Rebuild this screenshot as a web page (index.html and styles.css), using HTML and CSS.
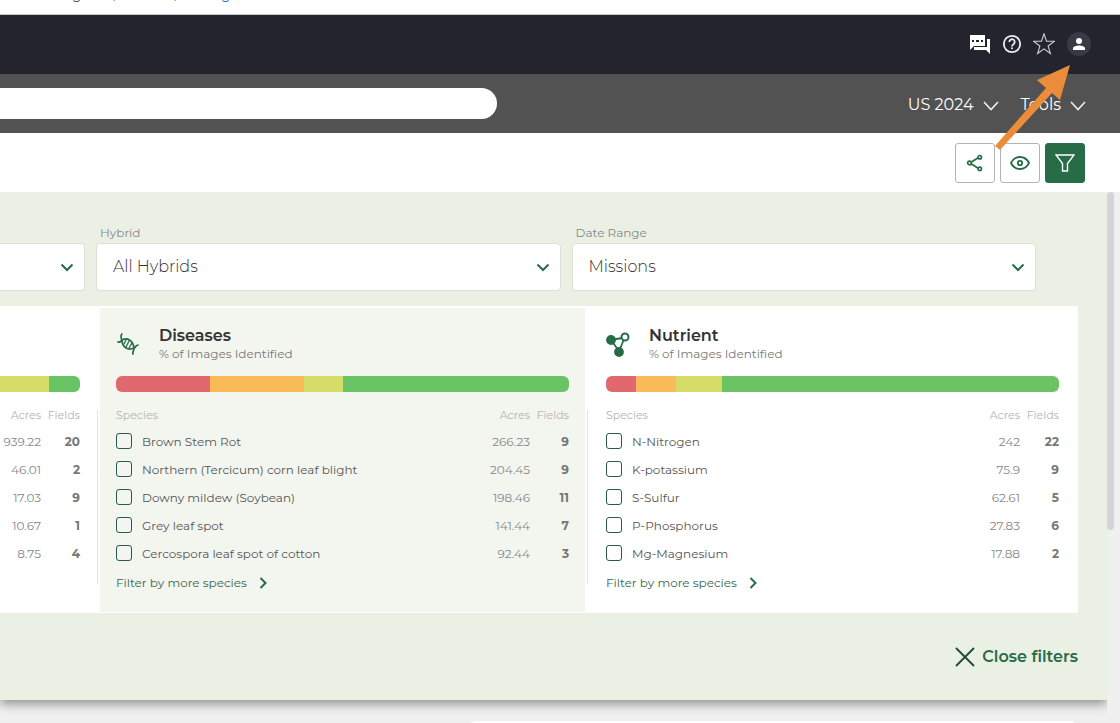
FILE: index.html
```html
<!DOCTYPE html>
<html lang="en">
<head>
    <meta charset="utf-8">
    <title>Field Filters</title>
    <link rel="stylesheet" href="styles.css">
</head>
<body>
    <div class="note">
        <p class="note-text"><span>g</span><span>,</span><span>,</span><a href="#">g</a></p>
    </div>

    <header class="header">
        <nav class="topbar">
            <button type="button" class="icon-button" aria-label="Messages">
                <svg width="22" height="22" viewBox="0 0 22 22">
                    <path d="M1 2h15v11H5l-4 4z" fill="#fff"/>
                    <path d="M18 6h3v15l-4-4H5v-3h13z" fill="#fff"/>
                    <path d="M3 7h2v2H3zM7 7h3v2H7zM12 7h2v2h-2z" fill="#24242e"/>
                </svg>
            </button>
            <button type="button" class="icon-button" aria-label="Help">
                <svg width="22" height="22" viewBox="0 0 22 22" fill="none" stroke="#eee" stroke-width="1.8">
                    <circle cx="11" cy="11" r="8.2"/>
                    <path d="M8.3 9a2.7 2.7 0 1 1 4.2 2.2c-1 .7-1.5 1.1-1.5 2.2"/>
                    <circle cx="11" cy="15.3" r="1" fill="#eee" stroke="none"/>
                </svg>
            </button>
            <button type="button" class="icon-button" aria-label="Favourites">
                <svg width="22" height="22" viewBox="0 0 22 22" fill="none" stroke="#ccc" stroke-width="1.1">
                    <path d="M11 .8l2.5 7.4h8l-6.4 4.8 2.3 7.5-6.4-4.6-6.4 4.6 2.3-7.5L.5 8.2h8z"/>
                </svg>
            </button>
            <button type="button" class="icon-button avatar" aria-label="Account">
                <svg width="14" height="14" viewBox="0 0 14 14" fill="#fff">
                    <circle cx="7" cy="4" r="3"/>
                    <path d="M1 13v-1.500C1 9.500 4 8.500 7 8.500s6 1 6 3V13z"/>
                </svg>
            </button>
        </nav>

        <div class="subbar">
            <input class="search" type="search" aria-label="Search">
            <div class="menus">
                <button type="button" class="menu">US 2024
                    <svg width="16" height="10" viewBox="0 0 16 10" fill="none" stroke="#eee" stroke-width="1.6"><path d="M1 1l7 7.5L15 1"/></svg>
                </button>
                <button type="button" class="menu">Tools
                    <svg width="16" height="10" viewBox="0 0 16 10" fill="none" stroke="#eee" stroke-width="1.6"><path d="M1 1l7 7.5L15 1"/></svg>
                </button>
            </div>
        </div>

        <!-- arrow that points at the account icon -->
        <svg class="pointer" width="78" height="88" viewBox="0 0 78 88" fill="#ea8c3a">
            <path d="M76 1L66 36l-8-7L6 86l-5-4 51-58-9-8z"/>
        </svg>
    </header>

    <div class="toolbar">
        <button type="button" class="tool" aria-label="Share">
            <svg width="18" height="18" viewBox="0 0 18 18" fill="none" stroke="#266c46" stroke-width="1.7">
                <path d="M5 8.2l7.2-4.4M5 9.8l7.2 4.4"/>
                <circle cx="3.5" cy="9" r="1.8"/><circle cx="13.8" cy="3.2" r="1.7"/><circle cx="13.8" cy="14.8" r="1.7"/>
            </svg>
        </button>
        <button type="button" class="tool" aria-label="View">
            <svg width="20" height="16" viewBox="0 0 20 16" fill="none" stroke="#266c46" stroke-width="1.8">
                <path d="M1 8c2-4 5.2-6 9-6s7 2 9 6c-2 4-5.2 6-9 6s-7-2-9-6z"/>
                <circle cx="10" cy="8" r="2.2"/>
            </svg>
        </button>
        <button type="button" class="tool active" aria-label="Filter">
            <svg width="20" height="18" viewBox="0 0 20 18" fill="none" stroke="#fff" stroke-width="1.4">
                <path d="M1 1h18l-6.5 8.5V17h-5V9.5z"/>
            </svg>
        </button>
    </div>

    <main class="main">
        <section class="panel">
            <div class="filters">
                <div class="filter first">
                    <label for="crop">&nbsp;</label>
                    <div class="select-box">
                        <select id="crop" aria-label="Crop"><option></option></select>
                        <svg width="14" height="9" viewBox="0 0 14 9"><path d="M1.5 1.5L7 7l5.5-5.5"/></svg>
                    </div>
                </div>
                <div class="filter">
                    <label for="hybrid">Hybrid</label>
                    <div class="select-box">
                        <select id="hybrid"><option>All Hybrids</option></select>
                        <svg width="14" height="9" viewBox="0 0 14 9"><path d="M1.5 1.5L7 7l5.5-5.5"/></svg>
                    </div>
                </div>
                <div class="filter">
                    <label for="range">Date Range</label>
                    <div class="select-box">
                        <select id="range"><option>Missions</option></select>
                        <svg width="14" height="9" viewBox="0 0 14 9"><path d="M1.5 1.5L7 7l5.5-5.5"/></svg>
                    </div>
                </div>
            </div>

            <div class="cards">
                <section class="card first">
                    <div class="card-head"></div>
                    <div class="bar">
                        <span class="yellow" style="flex-grow: 49"></span>
                        <span class="green" style="flex-grow: 31"></span>
                    </div>
                    <table>
                        <thead><tr><th class="acres">Acres</th><th class="fields">Fields</th></tr></thead>
                        <tbody>
                            <tr><td class="acres">939.22</td><td class="fields">20</td></tr>
                            <tr><td class="acres">46.01</td><td class="fields">2</td></tr>
                            <tr><td class="acres">17.03</td><td class="fields">9</td></tr>
                            <tr><td class="acres">10.67</td><td class="fields">1</td></tr>
                            <tr><td class="acres">8.75</td><td class="fields">4</td></tr>
                        </tbody>
                    </table>
                </section>

                <section class="card shaded">
                    <div class="card-head">
                        <svg width="24" height="24" viewBox="0 0 24 24" fill="none" stroke="#266c46" stroke-linecap="round">
                            <path d="M2 10C4 11 5 9 6 8c6-3 11 1 12 8 0 3-2 4-1 6" stroke-width="1.7"/>
                            <path d="M6 2C4 4 5 6 6 8c0 7 6 11 12 8 2-1 2-3 4-3" stroke-width="1.7"/>
                            <path d="M10 8l-2 4M13 9l-3 6M16 11l-3 5" stroke-width="1.3"/>
                        </svg>
                        <div>
                            <h2>Diseases</h2>
                            <p>% of Images Identified</p>
                        </div>
                    </div>
                    <div class="bar">
                        <span class="red" style="flex-grow: 94"></span>
                        <span class="orange" style="flex-grow: 94"></span>
                        <span class="yellow" style="flex-grow: 39"></span>
                        <span class="green" style="flex-grow: 226"></span>
                    </div>
                    <table>
                        <thead><tr><th>Species</th><th class="acres">Acres</th><th class="fields">Fields</th></tr></thead>
                        <tbody>
                            <tr><td><label><input type="checkbox">Brown Stem Rot</label></td><td class="acres">266.23</td><td class="fields">9</td></tr>
                            <tr><td><label><input type="checkbox">Northern (Tercicum) corn leaf blight</label></td><td class="acres">204.45</td><td class="fields">9</td></tr>
                            <tr><td><label><input type="checkbox">Downy mildew (Soybean)</label></td><td class="acres">198.46</td><td class="fields">11</td></tr>
                            <tr><td><label><input type="checkbox">Grey leaf spot</label></td><td class="acres">141.44</td><td class="fields">7</td></tr>
                            <tr><td><label><input type="checkbox">Cercospora leaf spot of cotton</label></td><td class="acres">92.44</td><td class="fields">3</td></tr>
                        </tbody>
                    </table>
                    <a class="more" href="#">Filter by more species
                        <svg width="8" height="12" viewBox="0 0 8 12"><path d="M1.5 1L6.5 6l-5 5"/></svg>
                    </a>
                </section>

                <section class="card">
                    <div class="card-head">
                        <svg width="24" height="26" viewBox="0 0 24 26" fill="none" stroke="#266c46" stroke-width="1.8">
                            <path d="M5 9l11-2M5 9l8 11M19 6l-6 14"/>
                            <circle cx="5" cy="9" r="4" fill="#266c46"/>
                            <circle cx="13" cy="21" r="4" fill="#266c46"/>
                            <circle cx="19" cy="6" r="3.5" fill="#fff" stroke-width="2"/>
                        </svg>
                        <div>
                            <h2>Nutrient</h2>
                            <p>% of Images Identified</p>
                        </div>
                    </div>
                    <div class="bar">
                        <span class="red" style="flex-grow: 30"></span>
                        <span class="orange" style="flex-grow: 40"></span>
                        <span class="yellow" style="flex-grow: 46"></span>
                        <span class="green" style="flex-grow: 337"></span>
                    </div>
                    <table>
                        <thead><tr><th>Species</th><th class="acres">Acres</th><th class="fields">Fields</th></tr></thead>
                        <tbody>
                            <tr><td><label><input type="checkbox">N-Nitrogen</label></td><td class="acres">242</td><td class="fields">22</td></tr>
                            <tr><td><label><input type="checkbox">K-potassium</label></td><td class="acres">75.9</td><td class="fields">9</td></tr>
                            <tr><td><label><input type="checkbox">S-Sulfur</label></td><td class="acres">62.61</td><td class="fields">5</td></tr>
                            <tr><td><label><input type="checkbox">P-Phosphorus</label></td><td class="acres">27.83</td><td class="fields">6</td></tr>
                            <tr><td><label><input type="checkbox">Mg-Magnesium</label></td><td class="acres">17.88</td><td class="fields">2</td></tr>
                        </tbody>
                    </table>
                    <a class="more" href="#">Filter by more species
                        <svg width="8" height="12" viewBox="0 0 8 12"><path d="M1.5 1L6.5 6l-5 5"/></svg>
                    </a>
                </section>
            </div>

            <button type="button" class="close">
                <svg width="20" height="20" viewBox="0 0 20 20" fill="none" stroke="#1f4a33" stroke-width="1.8"><path d="M1 1l18 18M19 1L1 19"/></svg>
                Close filters
            </button>
        </section>
        <div class="scroll"><div class="thumb"></div></div>
    </main>

    <div class="next-card"></div>
</body>
</html>
```
FILE: styles.css
```css
* {
    box-sizing: border-box;
}

body {
    margin: 0;
    height: 100vh;
    overflow: hidden;
    font-family: Montserrat, Inter, sans-serif;
    font-size: 12px;
    color: #555;
    background: #f0f0f0;
}

h2, p {
    margin: 0;
}

button {
    padding: 0;
    border: none;
    background: none;
    font-family: inherit;
    cursor: pointer;
}

svg {
    display: block;
    flex-shrink: 0;
}

/* end of the text line above the app */
.note {
    height: 15px;
    overflow: hidden;
    background: #fff;
    border-bottom: 1px solid #c4c8c4;
}

.note-text {
    display: grid;
    grid-template-columns: 41px 61px 47px auto;
    margin-top: -16px;
    padding-left: 72px;
    font-size: 14px;
    line-height: 20px;
}

.note-text a {
    color: #2f78b8;
    text-decoration: none;
}

/* header */
.header {
    position: relative;
}

.topbar {
    display: flex;
    justify-content: flex-end;
    align-items: center;
    gap: 10px;
    height: 59px;
    padding: 0 29px 2px 0;
    background: #24242e;
}

.avatar {
    display: flex;
    justify-content: center;
    align-items: center;
    width: 24px;
    height: 24px;
    margin-left: 2px;
    border-radius: 50%;
    background: #3a3a46;
}

.subbar {
    display: flex;
    justify-content: space-between;
    align-items: center;
    height: 59px;
    padding-right: 34px;
    background: #525252;
}

.search {
    width: 497px;
    height: 31px;
    padding: 0 16px;
    border: none;
    border-radius: 0 16px 16px 0;
    background: #fff;
    font-family: inherit;
}

.menus {
    display: flex;
    gap: 22px;
    padding-top: 2px;
}

.menu {
    display: flex;
    align-items: center;
    gap: 9px;
    color: #fff;
    font-size: 16px;
    line-height: 20px;
}

.menu svg {
    margin-top: 2px;
}

.pointer {
    position: absolute;
    top: 49px;
    right: 48px;
    z-index: 1;
    pointer-events: none;
}

/* tool buttons */
.toolbar {
    display: flex;
    justify-content: flex-end;
    align-items: center;
    gap: 5px;
    height: 59px;
    padding: 1px 35px 0 0;
    background: #fff;
}

.tool {
    display: flex;
    justify-content: center;
    align-items: center;
    width: 40px;
    height: 40px;
    border: 1px solid #b4b4b4;
    border-radius: 3px;
}

.tool.active {
    border-color: #266c46;
    background: #266c46;
}

/* filter panel */
.main {
    display: flex;
}

.panel {
    flex: 1;
    padding: 31px 29px 32px 0;
    background: #eaf0e4;
    box-shadow: 0 4px 10px rgba(0, 0, 0, 0.4);
    clip-path: inset(0 0 -20px 0);
}

.filters {
    display: grid;
    grid-template-columns: 85px 1fr 1fr;
    gap: 11px;
    margin-right: 42px;
}

.filter label {
    display: block;
    padding: 0 0 1px 4px;
    color: #888;
    font-size: 12px;
    line-height: 19px;
}

.select-box {
    position: relative;
}

.select-box select {
    display: block;
    width: 100%;
    height: 48px;
    padding: 0 40px 2px 16px;
    border: 1px solid #dcdfd8;
    border-radius: 4px;
    appearance: none;
    background: #fff;
    color: #333;
    font-family: inherit;
    font-size: 16px;
    font-weight: 300;
}

.filter.first select {
    border-left: none;
    border-radius: 0 4px 4px 0;
}

.select-box svg {
    position: absolute;
    top: 20px;
    right: 11px;
    fill: none;
    stroke: #266c46;
    stroke-width: 2;
    pointer-events: none;
}

/* cards */
.cards {
    display: grid;
    grid-template-columns: 100px 1fr 1fr;
    margin-top: 15px;
    padding: 2px 0 1px;
    background: #fff;
}

.card {
    position: relative;
    height: 304px;
    padding: 16px 19px 0 17px;
}

.card.first {
    padding: 16px 20px 0 0;
}

.card.shaded {
    padding: 16px 16px 0;
    border-right: 4px solid #fff;
    background: #f3f5ef;
}

/* thin line between cards */
.card.first::after,
.card.shaded::after {
    content: "";
    position: absolute;
    top: 102px;
    right: 2px;
    width: 1px;
    height: 174px;
    background: #e2e4e2;
}

.card.shaded::after {
    right: -3px;
}

.card-head {
    display: flex;
    align-items: center;
    gap: 19px;
    height: 40px;
}

.card-head h2 {
    color: #333;
    font-size: 16px;
    font-weight: 600;
    line-height: 20px;
}

.card-head p {
    color: #777;
    font-size: 12px;
    line-height: 16px;
}

.bar {
    display: flex;
    height: 16px;
    margin-top: 12px;
    border-radius: 6px;
    overflow: hidden;
}

.card.first .bar {
    border-radius: 0 6px 6px 0;
}

.red {
    background: #e0686e;
}

.orange {
    background: #f9bb58;
}

.yellow {
    background: #d6dc68;
}

.green {
    background: #6ac466;
}

table {
    width: 100%;
    margin-top: 15px;
    border-collapse: collapse;
}

th, td {
    height: 28px;
    padding: 0;
    text-align: left;
}

th {
    height: 20px;
    padding-bottom: 4px;
    color: #b4b4b4;
    font-size: 11px;
    font-weight: 400;
}

td label {
    display: flex;
    align-items: center;
    gap: 10px;
}

.acres, .fields {
    text-align: right;
    color: #888;
}

th.acres, th.fields {
    color: #b4b4b4;
}

.fields {
    width: 39px;
}

td.fields {
    color: #777;
    font-weight: 700;
}

input[type="checkbox"] {
    appearance: none;
    width: 16px;
    height: 16px;
    margin: 0;
    border: 1px solid #2c5a48;
    border-radius: 3px;
}

input[type="checkbox"]:checked {
    background: #266c46;
}

.more {
    display: flex;
    align-items: center;
    gap: 12px;
    margin-top: 8px;
    color: #3a6650;
    line-height: 16px;
    text-decoration: none;
}

.more svg {
    fill: none;
    stroke: #266c46;
    stroke-width: 2;
}

.close {
    display: flex;
    align-items: center;
    gap: 7px;
    margin: 33px 0 0 auto;
    color: #266c46;
    font-size: 16px;
    font-weight: 600;
    line-height: 22px;
}

.scroll {
    width: 13px;
}

.thumb {
    width: 7px;
    height: 338px;
    border-radius: 4px;
    background: #d6d4d6;
}

.next-card {
    height: 20px;
    margin: 21px 42px 0 468px;
    border-radius: 8px;
    background: #fff;
}
```
